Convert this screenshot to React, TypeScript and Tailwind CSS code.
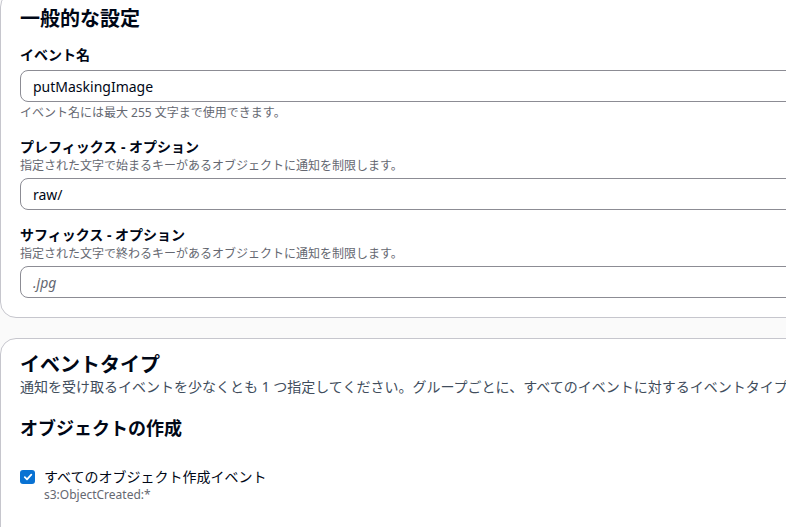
import React from "react";

const font = { fontFamily: '"Noto Sans", "Noto Sans CJK JP", sans-serif' };

function Field({
  label,
  desc,
  value,
  placeholder,
  helper,
  className,
}: {
  label: string;
  desc?: string;
  value?: string;
  placeholder?: string;
  helper?: string;
  className?: string;
}) {
  return (
    <div className={"flex flex-col " + (className ?? "")}>
      <div className="text-[14px] leading-[22px] font-bold text-[#000716]">{label}</div>
      {desc && <div className="text-[12px] leading-[16px] text-[#656871]">{desc}</div>}
      <div className="mt-[4px] h-[32px] w-[900px] rounded-[8px] border border-[#8c8c94] bg-white flex items-center pl-[12px]">
        {value ? (
          <span className="text-[14px] text-[#000716]">{value}</span>
        ) : (
          <span className="text-[14px] italic text-[#656871]">{placeholder}</span>
        )}
      </div>
      {helper && <div className="mt-[3px] text-[12px] leading-[16px] text-[#656871]">{helper}</div>}
    </div>
  );
}

export default function App() {
  return (
    <div style={font} className="w-[786px] h-[527px] overflow-hidden bg-[#fafafa]">
      <div className="w-[1000px] mt-[-9px] flex flex-col gap-[20px]">
        <div className="rounded-[16px] border border-[#c6c6cd] bg-white pt-[15px] pl-[19px] pb-[19px]">
          <div className="text-[20px] leading-[24px] font-bold text-[#000716]">一般的な設定</div>
          <Field
            className="mt-[13px]"
            label="イベント名"
            value="putMaskingImage"
            helper="イベント名には最大 255 文字まで使用できます。"
          />
          <Field
            className="mt-[15px]"
            label="プレフィックス - オプション"
            desc="指定された文字で始まるキーがあるオブジェクトに通知を制限します。"
            value="raw/"
          />
          <Field
            className="mt-[14px]"
            label="サフィックス - オプション"
            desc="指定された文字で終わるキーがあるオブジェクトに通知を制限します。"
            placeholder=".jpg"
          />
        </div>
        <div className="rounded-[16px] border border-[#c6c6cd] bg-white pt-[14px] pl-[19px] pb-[40px]">
          <div className="text-[20px] leading-[24px] font-bold text-[#000716]">イベントタイプ</div>
          <div className="text-[14px] leading-[20px] text-[#414d5c] whitespace-nowrap">
            通知を受け取るイベントを少なくとも 1 つ指定してください。グループごとに、すべてのイベントに対するイベントタイプ
          </div>
          <div className="mt-[20px] text-[18px] leading-[22px] font-bold text-[#000716]">オブジェクトの作成</div>
          <div className="mt-[28px] flex items-start gap-[9px]">
            <div className="mt-[3px] w-[15px] h-[14px] rounded-[3px] bg-[#0972d3] flex items-center justify-center">
              <svg width="10" height="10" viewBox="0 0 10 10" fill="none">
                <path d="M1.8 5.2 L4 7.3 L8.3 2.6" stroke="white" strokeWidth="1.8" strokeLinecap="round" strokeLinejoin="round" />
              </svg>
            </div>
            <div className="flex flex-col">
              <div className="text-[14px] leading-[20px] text-[#000716]">すべてのオブジェクト作成イベント</div>
              <div className="text-[12px] leading-[16px] text-[#656871]">s3:ObjectCreated:*</div>
            </div>
          </div>
        </div>
      </div>
    </div>
  );
}
